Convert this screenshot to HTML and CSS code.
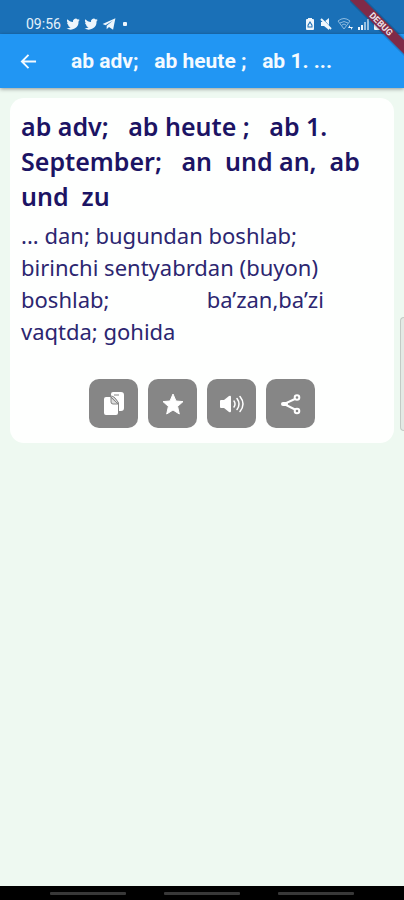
FILE: index.html
```html
<!DOCTYPE html>
<html lang="de">
<head>
<meta charset="utf-8">
<meta name="viewport" content="width=device-width, initial-scale=1">
<title>ab adv</title>
<link rel="stylesheet" href="styles.css">
</head>
<body>
<div class="status">
  <span class="clock">09:56</span>
  <svg class="bird" viewBox="0 0 24 24"><path d="M23.6 4.9c-.9.4-1.800.6-2.700.8 1-.6 1.700-1.500 2.100-2.600-.9.500-1.900.9-3 1.100a4.700 4.700 0 0 0-8 4.300C8 8.300 4.700 6.500 2.400 3.700a4.700 4.700 0 0 0 1.500 6.300c-.8 0-1.500-.2-2.100-.6 0 2.300 1.600 4.300 3.800 4.700-.7.2-1.400.2-2.100.1.600 1.900 2.300 3.200 4.400 3.300A9.500 9.500 0 0 1 .9 19.400 13.400 13.400 0 0 0 21.500 7.500c.8-.7 1.600-1.600 2.100-2.600z"/></svg>
  <svg class="bird" viewBox="0 0 24 24"><path d="M23.6 4.9c-.9.4-1.800.6-2.700.8 1-.6 1.700-1.500 2.100-2.600-.9.500-1.900.9-3 1.100a4.700 4.700 0 0 0-8 4.300C8 8.300 4.700 6.500 2.400 3.700a4.700 4.700 0 0 0 1.500 6.300c-.8 0-1.500-.2-2.100-.6 0 2.300 1.600 4.300 3.800 4.700-.7.2-1.400.2-2.100.1.600 1.900 2.300 3.200 4.400 3.300A9.500 9.500 0 0 1 .9 19.400 13.400 13.400 0 0 0 21.500 7.500c.8-.7 1.600-1.600 2.100-2.600z"/></svg>
  <svg class="bird" viewBox="0 0 24 24"><path d="M1 12 23 2l-4 20-7-5-4 4v-6L19 6 6 14z"/></svg>
  <span class="dot"></span>
  <span class="spacer"></span>
  <svg class="battery" viewBox="0 0 10 14"><path fill-rule="evenodd" d="M3 1h4v1h1q1 0 1 1v9q0 1-1 1H2q-1 0-1-1V3q0-1 1-1h1zM5 4 2.500 8v2.500h5V8zM5 6l1.500 2.500v1h-3v-1z"/></svg>
  <svg class="mute" viewBox="0 0 14 14"><path d="M2 5h3l5-4v12l-5-4H2z"/><path class="cut" d="M3 1l10 11"/><path class="line" d="M2 2l10 10"/></svg>
  <svg class="wifi" viewBox="0 0 16 14"><path class="faint" d="M1 4q6-5 12 0M3 6q4-3 8 0M5 8q2-2 4 0"/><path class="faint" d="M1 4l6 8 6-8"/><path d="m11 11 2-3v2h3l-2 3v-2z"/></svg>
  <svg class="signal" viewBox="0 0 12 14"><path d="M1 10h2v3H1z"/><path d="M4 8h2v5H4z"/><path opacity=".6" d="M7 5h2v8H7zM10 2h2v11h-2z"/></svg>
  <svg class="battery" viewBox="0 0 10 14"><path d="M3 1h4v1h1q1 0 1 1v9q0 1-1 1H2q-1 0-1-1V3q0-1 1-1h1z"/><path class="bolt" d="m6 4-3 4h2l-1 3 3-4H5z"/></svg>
</div>
<header class="bar">
  <button class="back" type="button" aria-label="Back"><svg viewBox="0 0 18 18"><path d="M17 9H2M9 2 2 9l7 7"/></svg></button>
  <span class="title">ab adv;   ab heute ;   ab 1. ...</span>
</header>
<svg class="ribbon" viewBox="0 0 54 60" role="img" aria-label="Debug"><path class="shade" d="M-2 0h18l38 38v18z"/><path class="band" d="M0 0h14l40 40v14z"/><text x="31" y="27" transform="rotate(45 31 24)">DEBUG</text></svg>
<main>
  <article class="card">
    <h1>ab adv;   ab heute ;   ab 1. September;   an  und an,  ab und  zu</h1>
    <p>... dan; bugundan boshlab; birinchi sentyabrdan (buyon) boshlab;&nbsp;&nbsp;&nbsp;&nbsp;&nbsp;&nbsp;&nbsp;&nbsp;&nbsp;&nbsp;&nbsp;&nbsp;&nbsp;&nbsp;&nbsp;&nbsp;&nbsp;ba’zan,ba’zi vaqtda; gohida</p>
    <div class="actions">
      <button type="button" aria-label="Copy"><svg viewBox="0 0 26 26"><path d="M10 3q0-2 2-2h8q3 0 3 3v13q0 3-3 3h-2v-8l-5-6h-3z"/><path d="M5 6h5v5q0 2 2 2h5v9q0 2-2 2H5q-2 0-2-2V8q0-2 2-2z"/><path class="fold" d="M10 6v5q0 2 2 2h5zM9 6l1-1q2 0 4 2l3 4v2M13 4h5"/></svg></button>
      <button type="button" aria-label="Favourite"><svg viewBox="0 0 26 26"><path class="star" d="m13 3 3 7 7 .6-5.400 4.800L19.300 23 13 19l-6.300 4 1.700-7.600L3 10.600l7-.6z"/></svg></button>
      <button type="button" aria-label="Listen"><svg viewBox="0 0 26 26"><path d="M1 10q0-1 1-1h3l5-4q2-1 2 1v14q0 2-2 1l-5-4H2q-1 0-1-1z"/><path class="wave" d="M15 10q2 3 0 6M18 7.500q4 5.500 0 11M21 5.500q6 7.500 0 15"/></svg></button>
      <button type="button" aria-label="Share"><svg viewBox="0 0 26 26"><path class="link" d="M18 7.500 6 13l12 6"/><rect x="3" y="11" width="7" height="4" rx="2"/><circle class="ring" cx="19" cy="6.500" r="2.300"/><circle class="ring" cx="19" cy="20" r="2.300"/></svg></button>
    </div>
  </article>
</main>
<div class="edge"></div>
<footer class="nav"><span></span><span></span><span></span></footer>
</body>
</html>
```
FILE: styles.css
```css
* { box-sizing: border-box; }
body {
  margin: 0;
  min-height: 100vh;
  display: flex;
  flex-direction: column;
  position: relative;
  overflow-x: hidden;
  background: #eef9f1;
  font-family: Roboto, sans-serif;
}
svg { display: block; flex: none; }
.status {
  display: flex;
  align-items: center;
  height: 34px;
  padding: 14px 21px 0 26px;
  background: #1a70b7;
  color: #e4f0fa;
  gap: 4px;
}
.status svg { fill: #eef6fc; height: 14px; }
.clock { font-size: 14px; line-height: 20px; margin-right: 1px; }
.status .bird { width: 14px; }
.dot { width: 4px; height: 4px; margin-left: 3px; border-radius: 1px; background: #eef6fc; }
.spacer { flex: 1; }
.battery { width: 10px; }
.mute { width: 14px; }
.wifi { width: 16px; }
.signal { width: 12px; }
.line { stroke: #eef6fc; stroke-width: 2; }
.cut { stroke: #1a70b7; stroke-width: 1; }
.faint { fill: none; stroke: #8dbbe0; stroke-width: 1; }
.status .bolt { fill: #1a70b7; }
.bar {
  display: flex;
  align-items: center;
  height: 54px;
  padding: 0 16px;
  background: #2196f3;
  color: #f4faff;
  box-shadow: 0 1px 4px rgba(0, 0, 0, 0.4);
}
.back {
  padding: 4px;
  border: 0;
  background: none;
}
.back svg {
  width: 17px;
  height: 17px;
  fill: none;
  stroke: #f4faff;
  stroke-width: 2;
}
.title {
  margin-left: 30px;
  font-size: 21px;
  font-weight: 700;
  white-space: pre;
}
.ribbon {
  position: absolute;
  top: 0;
  right: 0;
  width: 54px;
  height: 60px;
}
.band { fill: #7f2a48; }
.shade { fill: #000; opacity: 0.15; }
.ribbon text {
  fill: #f0e4ea;
  font: bold 9px Roboto, sans-serif;
  text-anchor: middle;
}
main { flex: 1; padding: 10px; }
.card {
  padding: 11px 11px 15px;
  border-radius: 14px;
  background: #fefffe;
  color: #1c1464;
  font-family: "Noto Sans", sans-serif;
}
h1, p { margin: 0; white-space: pre-wrap; }
h1 {
  font-size: 25px;
  line-height: 35px;
  font-weight: 600;
}
p {
  padding: 5px 16px 0 0;
  font-size: 22px;
  line-height: 32px;
  color: #2c2670;
}
.actions {
  display: flex;
  justify-content: center;
  gap: 10px;
  margin-top: 32px;
}
.actions button {
  display: grid;
  place-items: center;
  width: 49px;
  height: 49px;
  padding: 0;
  border: 0;
  border-radius: 10px;
  background: #868686;
}
.actions svg { width: 26px; height: 26px; fill: #fff; }
.star { stroke: #fff; stroke-linejoin: round; }
.actions .fold { fill: #ddd; stroke: #868686; stroke-width: 1; }
.actions .wave { fill: none; stroke: #fff; stroke-width: 1.5; stroke-linecap: round; }
.actions .link { fill: none; stroke: #fff; stroke-width: 2; }
.actions .ring { fill: #868686; stroke: #fff; stroke-width: 2; }
.edge {
  position: absolute;
  top: 317px;
  right: 0;
  width: 4px;
  height: 114px;
  border: 1px solid #c3cac5;
  border-right: 0;
  border-radius: 4px 0 0 4px;
  background: #e3e9e4;
}
.nav {
  display: flex;
  justify-content: center;
  align-items: center;
  gap: 38px;
  height: 14px;
  padding-top: 1px;
  background: #000;
}
.nav span { width: 76px; height: 3px; background: #383838; border-radius: 1px; }
```
